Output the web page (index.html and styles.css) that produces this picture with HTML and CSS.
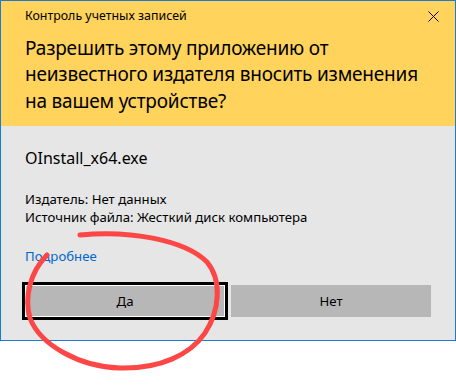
FILE: index.html
```html
<!DOCTYPE html>
<html lang="ru">
<head>
<meta charset="utf-8">
<title>Контроль учетных записей</title>
<link rel="stylesheet" href="styles.css">
</head>
<body>
<div class="page">
  <div class="dialog">
    <div class="header">
      <div class="titlebar">
        <span class="title">Контроль учетных записей</span>
        <svg class="close" width="11" height="11" viewBox="0 0 11 11"><path d="M0.5 0.5L10.5 10.5M10.5 0.5L0.5 10.5" stroke="#000" stroke-width="1" fill="none"/></svg>
      </div>
      <h1 class="prompt">Разрешить этому приложению от<br>неизвестного издателя вносить изменения<br>на вашем устройстве?</h1>
    </div>
    <div class="body">
      <div class="app">OInstall_x64.exe</div>
      <div class="info">
        <div>Издатель: Нет данных</div>
        <div>Источник файла: Жесткий диск компьютера</div>
      </div>
      <a class="more" href="#">Подробнее</a>
      <div class="buttons">
        <button class="btn btn-focus">Да</button>
        <button class="btn">Нет</button>
      </div>
    </div>
  </div>
  <svg class="scribble" width="456" height="392" viewBox="0 0 456 392">
    <path d="M80 235 C 130 230, 185 240, 207 262 C 222 280, 220 310, 205 333 C 190 355, 160 369, 120 368 C 80 367, 40 345, 30 318 C 24 298, 30 272, 47 255" stroke="#fd4646" stroke-width="5" stroke-linecap="round" fill="none"/>
  </svg>
</div>
</body>
</html>
```
FILE: styles.css
```css
html, body {
  margin: 0;
  padding: 0;
  background: #ffffff;
}
body {
  font-family: "Noto Sans", "Open Sans", sans-serif;
  color: #000;
}
.page {
  position: relative;
  width: 456px;
  height: 392px;
  overflow: hidden;
}
.dialog {
  box-sizing: border-box;
  width: 456px;
  border: 1px solid #1a7bd2;
}
.header {
  background: #ffd35c;
  padding: 7px 24px 11px 24px;
}
.titlebar {
  display: flex;
  justify-content: space-between;
  align-items: center;
  height: 16px;
  margin-right: -8px;
}
.title {
  font-size: 12.4px;
  line-height: 16px;
}
.close {
  display: block;
}
.prompt {
  margin: 10px 0 0 0;
  padding-top: 0.5px;
  font-size: 19px;
  line-height: 26.67px;
  font-weight: normal;
  letter-spacing: -0.2px;
  white-space: nowrap;
}
.body {
  background: #e6e6e6;
  padding: 21.5px 24px 23px 24px;
}
.app {
  font-size: 16px;
  line-height: 22px;
}
.info {
  margin-top: 21px;
  font-size: 13.2px;
  line-height: 18px;
}
.more {
  display: block;
  margin-top: 21px;
  font-size: 13.2px;
  line-height: 18px;
  color: #0066cc;
  text-decoration: none;
}
.buttons {
  display: flex;
  gap: 6px;
  margin-top: 20px;
}
.btn {
  box-sizing: border-box;
  width: 200px;
  height: 32px;
  border: 1px solid #b7b7b7;
  background: #b7b7b7;
  font-family: "Noto Sans", "Open Sans", sans-serif;
  font-size: 13.2px;
  color: #000;
  padding: 0;
  margin: 0;
}
.btn-focus {
  border-color: #ffffff;
  outline: 3px solid #000;
}
.scribble {
  position: absolute;
  top: 0;
  left: 0;
  pointer-events: none;
}
```
